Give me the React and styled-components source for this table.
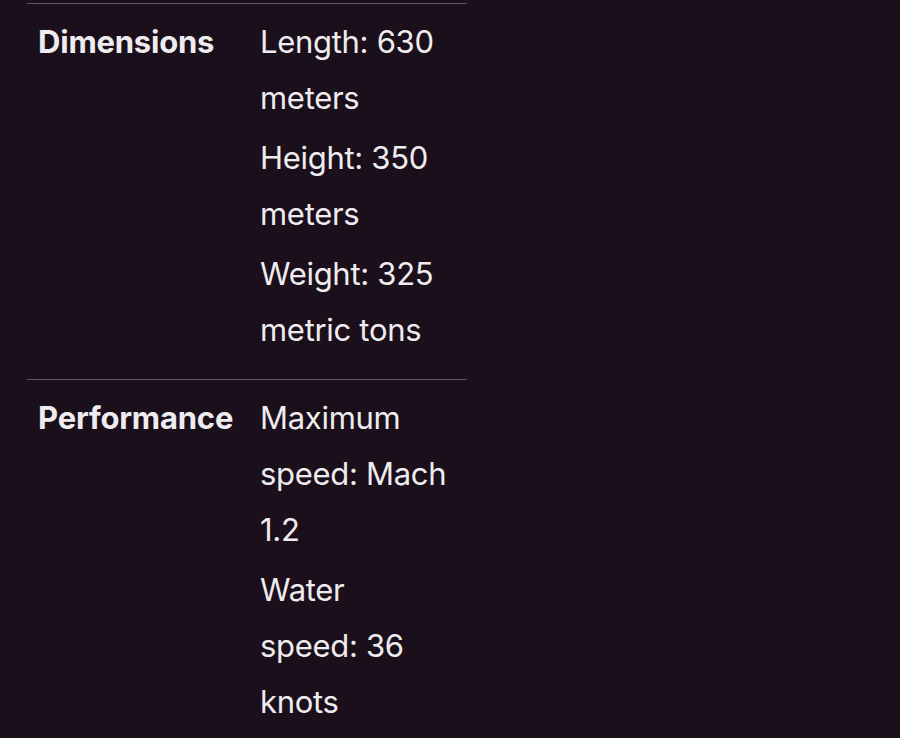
import React from "react";
import styled, { createGlobalStyle } from "styled-components";

const Global = createGlobalStyle`
  html, body { margin: 0; padding: 0; background: #1b0f1c; }
  body { font-family: Inter, "Noto Sans", sans-serif; color: #efecef; }
`;

const Page = styled.div`
  min-height: 738px;
  background: #1b0f1c;
  padding: 3px 0 0 27px;
  box-sizing: border-box;
`;

const Table = styled.div`
  width: 440px;
  display: flex;
  flex-direction: column;
`;

const Row = styled.div`
  display: grid;
  grid-template-columns: 233px 1fr;
  border-top: 1.5px solid #625863;
  padding: 10px 20px 21px 0;
`;

const Label = styled.div`
  padding-left: 11px;
  font-weight: 700;
  font-size: 31px;
  line-height: 56px;
  letter-spacing: -0.2px;
`;

const Values = styled.div`
  display: flex;
  flex-direction: column;
  gap: 4px;
`;

const Value = styled.div`
  font-size: 31px;
  font-weight: 400;
  line-height: 56px;
  letter-spacing: -0.3px;
`;

const rows = [
  {
    label: "Dimensions",
    values: ["Length: 630 meters", "Height: 350 meters", "Weight: 325 metric tons"],
  },
  {
    label: "Performance",
    values: ["Maximum speed: Mach 1.2", "Water speed: 36 knots"],
  },
];

export default function App() {
  return (
    <Page>
      <Global />
      <Table>
        {rows.map((r) => (
          <Row key={r.label}>
            <Label>{r.label}</Label>
            <Values>
              {r.values.map((v) => (
                <Value key={v}>{v}</Value>
              ))}
            </Values>
          </Row>
        ))}
      </Table>
    </Page>
  );
}
